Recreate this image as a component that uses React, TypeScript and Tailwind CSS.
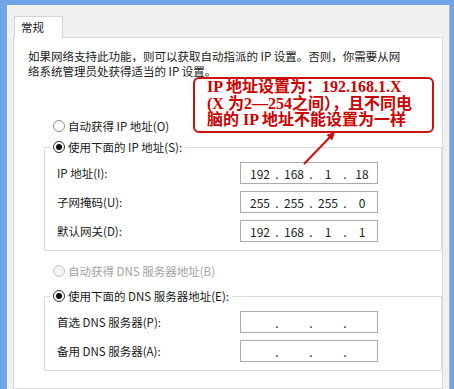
import React from "react";

const ui = { fontFamily: '"Noto Sans CJK SC", "Noto Sans", sans-serif' };

const Radio: React.FC<{ checked?: boolean; disabled?: boolean }> = ({ checked, disabled }) => (
  <span
    className={
      "flex h-[12px] w-[12px] shrink-0 items-center justify-center rounded-full border " +
      (disabled ? "border-[#c4c4c4] bg-[#f2f2f2]" : checked ? "border-[#333] bg-white" : "border-[#8a8a8a] bg-white")
    }
  >
    {checked && <span className="h-[6px] w-[6px] rounded-full bg-[#111]" />}
  </span>
);

const IpBox: React.FC<{ parts: string[] }> = ({ parts }) => (
  <div className="flex h-[22px] w-[138px] items-center border border-[#ababab] bg-white pl-[4px] text-[12px] text-[#222]">
    {parts.map((p, i) => (
      <React.Fragment key={i}>
        <span className="w-[30px] text-center">{p}</span>
        {i < 3 && <span className="w-[4px] text-center">.</span>}
      </React.Fragment>
    ))}
  </div>
);

const Row: React.FC<{ label: string; parts: string[] }> = ({ label, parts }) => (
  <div className="flex items-center">
    <span className="w-[195px] pl-[12px]">{label}</span>
    <IpBox parts={parts} />
  </div>
);

export default function App() {
  return (
    <div
      className="relative flex h-[389px] w-[454px] overflow-hidden bg-[#6fa5e6] px-[7px] pt-[5px] text-[11.5px] leading-[15px] text-[#1a1a1a]"
      style={ui}
    >
      <div className="flex flex-1 flex-col border-l border-r border-l-[#f8f8f8] border-r-[#b8b8b8] bg-[#f0f0f0] pl-[5px] pr-[6px] pt-[11px]">
        <div className="relative z-10 -mb-px ml-px flex h-[22px] w-[49px] items-start border border-b-0 border-[#d4d4d4] bg-white pl-[6px] pt-[3px]">
          常规
        </div>
        <div className="flex-1 border border-[#d9d9d9] bg-white pl-[14px] pt-[11px]">
          <p>
            如果网络支持此功能，则可以获取自动指派的 IP 设置。否则，你需要从网
            <br />
            络系统管理员处获得适当的 IP 设置。
          </p>

          <div className="mt-[37px] ml-[25px] flex h-[20px] items-center gap-[3px]">
            <Radio />
            <span>自动获得 IP 地址(O)</span>
          </div>

          <fieldset className="mt-[1px] ml-[16px] w-[398px] border border-[#dcdcdc] pb-[8px]">
            <legend className="ml-[5px] flex h-[20px] items-center gap-[3px] px-[3px]">
              <Radio checked />
              <span>使用下面的 IP 地址(S):</span>
            </legend>
            <div className="mt-[5px] flex flex-col gap-[7px]">
              <Row label="IP 地址(I):" parts={["192", "168", "1", "18"]} />
              <Row label="子网掩码(U):" parts={["255", "255", "255", "0"]} />
              <Row label="默认网关(D):" parts={["192", "168", "1", "1"]} />
            </div>
          </fieldset>

          <div className="mt-[10px] ml-[25px] flex h-[20px] items-center gap-[3px] text-[#a3a3a3]">
            <Radio disabled />
            <span>自动获得 DNS 服务器地址(B)</span>
          </div>

          <fieldset className="mt-[5px] ml-[16px] w-[398px] border border-[#dcdcdc] pb-[8px]">
            <legend className="ml-[5px] flex h-[20px] items-center gap-[3px] px-[3px]">
              <Radio checked />
              <span>使用下面的 DNS 服务器地址(E):</span>
            </legend>
            <div className="mt-[5px] flex flex-col gap-[7px]">
              <Row label="首选 DNS 服务器(P):" parts={["", "", "", ""]} />
              <Row label="备用 DNS 服务器(A):" parts={["", "", "", ""]} />
            </div>
          </fieldset>
        </div>
      </div>

      {/* red annotation */}
      <div
        className="absolute left-[193px] top-[77px] h-[56px] w-[241px] rounded-[6px] border-2 border-[#cc1111] bg-white pl-[12px] text-[16px] font-bold leading-[16.5px] text-[#cc0000]"
        style={{ fontFamily: '"Liberation Serif", "Noto Sans CJK SC", serif' }}
      >
        <div>IP 地址设置为：192.168.1.X</div>
        <div>(X 为2—254之间），且不同电</div>
        <div>脑的 IP 地址不能设置为一样</div>
      </div>
      <svg className="pointer-events-none absolute left-0 top-0" width="454" height="389">
        <line x1="304" y1="164" x2="331" y2="136" stroke="#cc1111" strokeWidth="2" />
        <polygon points="335,132 332.2,140.5 326.5,134.8" fill="#cc1111" />
      </svg>
    </div>
  );
}
